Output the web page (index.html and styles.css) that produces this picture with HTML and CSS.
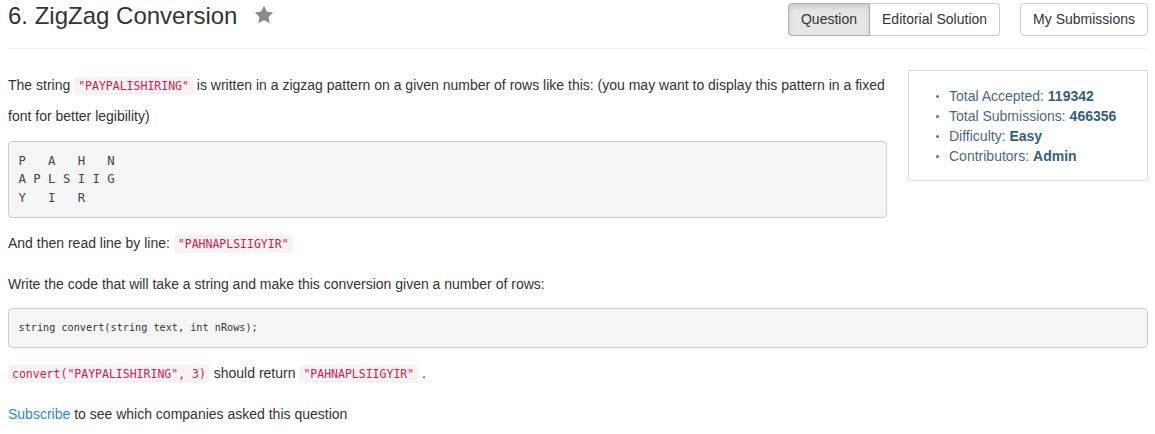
FILE: index.html
```html
<!DOCTYPE html>
<html>
<head>
<meta charset="utf-8">
<link rel="stylesheet" href="styles.css">
</head>
<body>
<div class="page">
  <header class="header">
    <div class="title-wrap">
      <h3 class="title">6. ZigZag Conversion</h3>
      <svg class="star" width="22" height="22" viewBox="0 0 24 24"><path d="M12 2l3.09 6.26L22 9.27l-5 4.87 1.18 6.88L12 17.77l-6.18 3.25L7 14.14 2 9.27l6.91-1.01z" fill="#8a8a8a"/></svg>
    </div>
    <div class="actions">
      <div class="btn-group">
        <span class="btn active">Question</span><span class="btn">Editorial Solution</span>
      </div>
      <span class="btn single">My Submissions</span>
    </div>
  </header>

  <main class="content">
    <aside class="stats">
      <ul class="stats-list">
        <li>Total Accepted: <b>119342</b></li>
        <li>Total Submissions: <b>466356</b></li>
        <li>Difficulty: <b>Easy</b></li>
        <li>Contributors: <b>Admin</b></li>
      </ul>
    </aside>
    <p>The string <code>"PAYPALISHIRING"</code> is written in a zigzag pattern on a given number of rows like this: (you may want to display this pattern in a fixed font for better legibility)</p>
    <pre class="pattern">P   A   H   N
A P L S I I G
Y   I   R</pre>
    <p>And then read line by line: <code>"PAHNAPLSIIGYIR"</code></p>
    <p>Write the code that will take a string and make this conversion given a number of rows:</p>
    <pre class="signature"><span class="sig">string convert(string text, int nRows);</span></pre>
    <p><code>convert("PAYPALISHIRING", 3)</code> should return <code>"PAHNAPLSIIGYIR"</code> .</p>
    <p><a class="link" href="#">Subscribe</a> to see which companies asked this question</p>
  </main>
</div>
</body>
</html>
```

FILE: styles.css
```css
html, body {
  margin: 0;
  padding: 0;
  background: #fff;
}
body {
  font-family: "Liberation Sans", Arial, sans-serif;
  font-size: 14px;
  color: #333;
}
.page {
  margin: 0 7px 0 8px;
}
.header {
  display: flex;
  justify-content: space-between;
  align-items: flex-start;
  height: 48px;
  border-bottom: 1px solid #eee;
}
.title-wrap {
  display: flex;
  align-items: flex-start;
}
.title {
  margin: 3px 0 0;
  font-size: 24px;
  font-weight: normal;
  line-height: 26px;
  color: #333;
}
.star {
  margin: 4px 0 0 16px;
}
.actions {
  display: flex;
  align-items: flex-start;
  margin-top: 3px;
}
.btn-group {
  display: flex;
}
.btn {
  display: inline-block;
  padding: 6px 12px;
  line-height: 19px;
  font-size: 14px;
  color: #333;
  background: #fff;
  border: 1px solid #ccc;
}
.btn-group .btn:first-child {
  border-radius: 4px 0 0 4px;
}
.btn-group .btn:last-child {
  border-radius: 0 4px 4px 0;
  border-left: none;
}
.btn.active {
  background: #e6e6e6;
  border-color: #adadad;
  box-shadow: inset 0 3px 5px rgba(0, 0, 0, 0.125);
}
.btn.single {
  margin-left: 20px;
  border-radius: 4px;
}
.content {
  padding-top: 21px;
}
.stats {
  float: right;
  width: 240px;
  box-sizing: border-box;
  margin-left: 21px;
  border: 1px solid #ddd;
  padding: 15px 0 14px 27px;
}
.stats-list {
  list-style: none;
  margin: 0;
  padding: 0;
  color: #4a6a7e;
  line-height: 20px;
}
.stats-list li::before {
  content: "";
  display: inline-block;
  width: 3px;
  height: 3px;
  border-radius: 50%;
  background: #5d7788;
  margin-right: 10px;
  vertical-align: middle;
  position: relative;
  top: -1px;
}
.stats-list b {
  color: #34607a;
}
p {
  margin: 0 0 10px;
  line-height: 30px;
}
code {
  font-family: "DejaVu Sans Mono", "Liberation Mono", monospace;
  font-size: 11.5px;
  color: #c7254e;
  background: #f9f2f4;
  padding: 2px 4px;
  border-radius: 4px;
}
pre {
  overflow: auto;
  margin: 0 0 10px;
  padding: 9.5px;
  background: #f5f5f5;
  border: 1px solid #ccc;
  border-radius: 4px;
  color: #333;
  font-family: "DejaVu Sans Mono", "Liberation Mono", monospace;
}
.pattern {
  font-size: 12.3px;
  line-height: 18.5px;
  color: #444;
}
.signature {
  margin-top: -1px;
  font-size: 13px;
  line-height: 18px;
}
.sig {
  font-size: 10.2px;
}
.link {
  color: #2d8ac7;
  text-decoration: none;
}
```
